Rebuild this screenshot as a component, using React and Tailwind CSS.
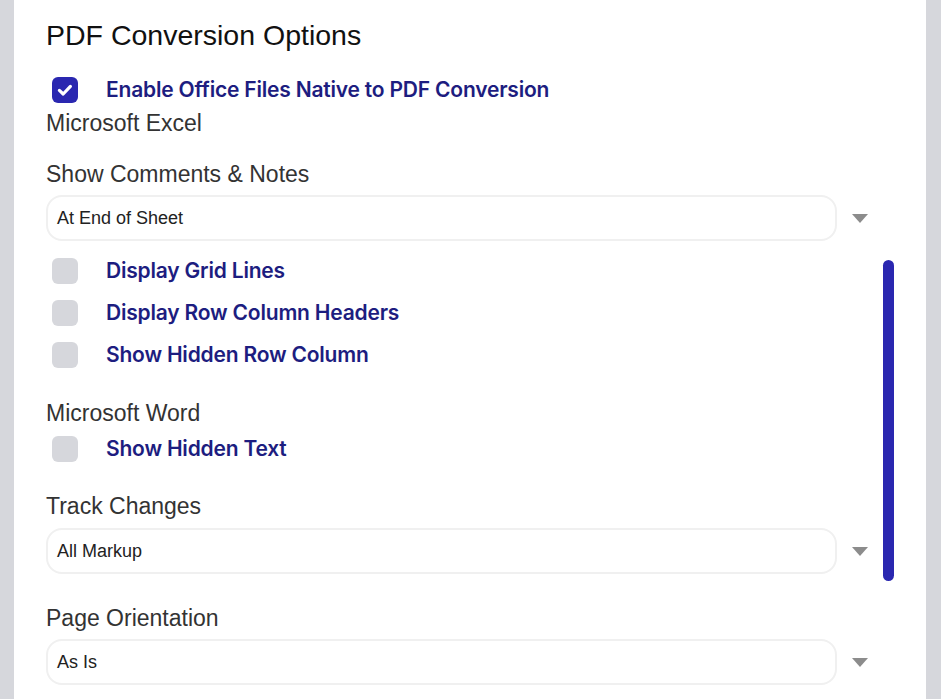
import { useState } from 'react';

const sans = { fontFamily: '"Liberation Sans", Arial, sans-serif' };

function Check({ label, checked, onToggle, tall = 'h-[42px]' }) {
    return (
        <label className={`flex ${tall} cursor-pointer items-center`}>
            <span
                onClick={onToggle}
                className={`ml-[6px] flex h-[26px] w-[26px] items-center justify-center rounded-[6px] ${
                    checked ? 'bg-[#2a27b0]' : 'bg-[#d6d7dc]'
                }`}
            >
                {checked && (
                    <svg width="18" height="18" viewBox="0 0 18 18">
                        <path
                            d="M3.4 9.4 7.2 13 14.4 5.4"
                            fill="none"
                            stroke="white"
                            strokeWidth="3.2"
                            strokeLinecap="round"
                            strokeLinejoin="round"
                        />
                    </svg>
                )}
            </span>
            <span className="ml-[28px] font-['Inter',sans-serif] text-[21px] font-semibold tracking-[-0.2px] text-[#1d1d80]">
                {label}
            </span>
        </label>
    );
}

function Select({ value }) {
    return (
        <div className="flex items-center">
            <div
                style={sans}
                className="flex h-[46px] w-[791px] items-center rounded-[16px] border-2 border-[#f0f0f0] px-[9px] text-[18px] text-[#222]"
            >
                {value}
            </div>
            <svg className="ml-[15px]" width="16" height="9" viewBox="0 0 16 9">
                <polygon points="0,0 16,0 8,9" fill="#8c8c8c" />
            </svg>
        </div>
    );
}

function Heading({ children, className }) {
    return (
        <div style={sans} className={`text-[23px] leading-[26px] text-[#333] ${className}`}>
            {children}
        </div>
    );
}

export default function App() {
    const [opts, setOpts] = useState({
        native: true,
        grid: false,
        headers: false,
        hidden: false,
        hiddenText: false,
    });
    const toggle = (k) => setOpts({ ...opts, [k]: !opts[k] });

    return (
        <div className="flex h-[699px] overflow-hidden bg-[#d6d7dc] px-[14px] pr-[15px]">
            <div className="relative flex-1 bg-white pl-[32px] pt-[18px]">
                <h1 style={sans} className="text-[28.5px] leading-[34px] text-[#111]">
                    PDF Conversion Options
                </h1>

                <div className="mt-[18px]">
                    <Check
                        label="Enable Office Files Native to PDF Conversion"
                        checked={opts.native}
                        onToggle={() => toggle('native')}
                        tall="h-[40px]"
                    />
                </div>

                <Heading>Microsoft Excel</Heading>

                <Heading className="mt-[25px]">Show Comments &amp; Notes</Heading>
                <div className="mt-[8px]">
                    <Select value="At End of Sheet" />
                </div>

                <div className="mt-[9px]">
                    <Check label="Display Grid Lines" checked={opts.grid} onToggle={() => toggle('grid')} />
                    <Check
                        label="Display Row Column Headers"
                        checked={opts.headers}
                        onToggle={() => toggle('headers')}
                    />
                    <Check
                        label="Show Hidden Row Column"
                        checked={opts.hidden}
                        onToggle={() => toggle('hidden')}
                    />
                </div>

                <Heading className="mt-[24px]">Microsoft Word</Heading>
                <div className="mt-[2px]">
                    <Check
                        label="Show Hidden Text"
                        checked={opts.hiddenText}
                        onToggle={() => toggle('hiddenText')}
                    />
                </div>

                <Heading className="mt-[23px]">Track Changes</Heading>
                <div className="mt-[9px]">
                    <Select value="All Markup" />
                </div>

                <Heading className="mt-[31px]">Page Orientation</Heading>
                <div className="mt-[8px]">
                    <Select value="As Is" />
                </div>

                {/* scroll thumb */}
                <div className="absolute left-[869px] top-[260px] h-[321px] w-[11px] rounded-full bg-[#2a27b0]" />
            </div>
        </div>
    );
}
